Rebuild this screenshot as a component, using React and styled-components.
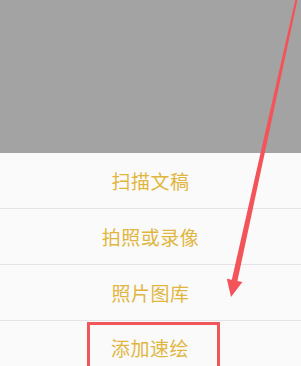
import React from "react";
import styled, { createGlobalStyle } from "styled-components";

const GlobalStyle = createGlobalStyle`
  html, body {
    margin: 0;
    padding: 0;
    background: #fafafa;
  }
`;

const items = [
  { label: "扫描文稿" },
  { label: "拍照或录像" },
  { label: "照片图库" },
  { label: "添加速绘", highlight: true },
];

const App = () => {
  return (
    <Screen>
      <GlobalStyle />
      <Backdrop />
      <Sheet>
        {items.map((item, i) => (
          <Row key={item.label} $first={i === 0} $highlight={item.highlight}>
            <Label $highlight={item.highlight}>{item.label}</Label>
          </Row>
        ))}
      </Sheet>
      <Arrow viewBox="0 0 301 366" aria-hidden="true">
        <polygon
          points="295.2,0 297.4,0 237.4,281 242.4,282.1 231,297 226.8,278.7 231.8,279.8"
          fill="#f2545a"
        />
      </Arrow>
    </Screen>
  );
};

export default App;

const Screen = styled.div`
  position: relative;
  width: 301px;
  height: 366px;
  overflow: hidden;
  display: flex;
  flex-direction: column;
  background: #fafafa;
  font-family: "Noto Sans CJK SC", "Noto Sans", sans-serif;
`;

const Backdrop = styled.div`
  height: 153px;
  flex-shrink: 0;
  background: #a3a3a3;
`;

const Sheet = styled.div`
  display: flex;
  flex-direction: column;
  background: #fafafa;
`;

const Row = styled.div`
  height: 55px;
  flex-shrink: 0;
  display: flex;
  justify-content: center;
  align-items: ${p => (p.$highlight ? "flex-start" : "center")};
  border-top: ${p => (p.$first ? "none" : "1px solid #e4e4e4")};
  overflow: visible;
`;

const Label = styled.div`
  font-size: 19px;
  line-height: 26px;
  color: #e1b63f;
  letter-spacing: 0.5px;
  ${p =>
    p.$highlight &&
    `
    margin: 1px 0 0 6px;
    height: 60px;
    box-sizing: border-box;
    padding: 10px 28px 0 21px;
    border: 3px solid #f0575b;
  `}
`;

const Arrow = styled.svg`
  position: absolute;
  left: 0;
  top: 0;
  width: 301px;
  height: 366px;
  pointer-events: none;
`;
